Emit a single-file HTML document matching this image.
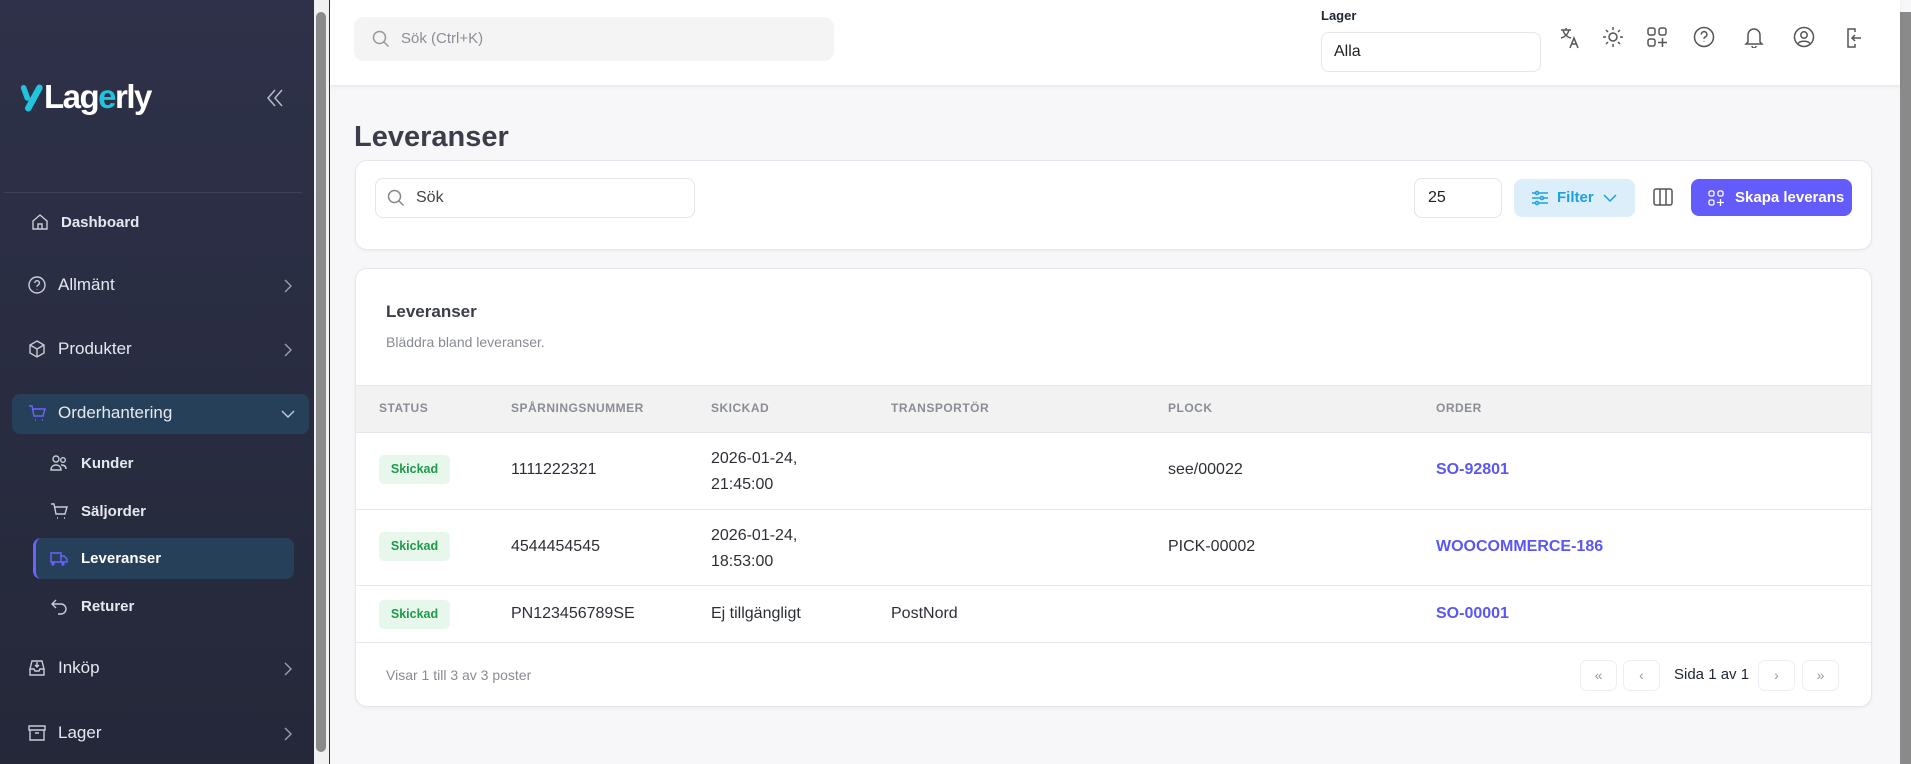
<!DOCTYPE html>
<html><head><meta charset="utf-8"><style>
*{box-sizing:border-box;margin:0;padding:0}
body{width:1911px;height:764px;overflow:hidden;font-family:"Liberation Sans",sans-serif;background:#f7f7f9;position:relative;color:#333}
.a{position:absolute}
#sb{left:0;top:0;width:314px;height:764px;background:linear-gradient(#2e3149,#242839)}
.si{position:absolute;color:#e6e8ef;font-size:17px;display:flex;align-items:center}
.si svg{stroke:#c9ccd6;fill:none;stroke-width:1.4}
.chev{position:absolute;left:282px;width:12px;height:16px}
.sub{font-size:15px;font-weight:bold}
.card{background:#fff;border:1px solid #e6e7ee;border-radius:12px;box-shadow:0 1px 3px rgba(0,0,0,.05)}
.th{position:absolute;top:401px;font-size:12px;font-weight:bold;color:#8a8d96;letter-spacing:.5px}
.td{position:absolute;font-size:16px;color:#2c2f36;line-height:26px}
.badge{position:absolute;left:379px;width:71px;height:29px;background:#e8f7ec;color:#1f9a48;font-size:12.5px;font-weight:bold;border-radius:5px;text-align:center;line-height:29px}
.lnk{position:absolute;left:1436px;font-size:16px;font-weight:bold;color:#5b57f5}
.pb{position:absolute;top:660px;width:37px;height:31px;border:1px solid #eceef2;border-radius:7px;color:#999;text-align:center;line-height:29px;font-size:14px}
.ic{position:absolute;top:26px;stroke:#555;fill:none;stroke-width:1.5}
</style></head><body>
<div id="sb" class="a">
 <svg class="a" style="left:19px;top:84px" width="26" height="28" viewBox="0 0 28 30"><path d="M5 4 L9 15" stroke="#22c4dd" stroke-width="6" stroke-linecap="round"/><path d="M22 4 L10 26" stroke="#22c4dd" stroke-width="7" stroke-linecap="round"/></svg>
 <div class="a" style="left:44px;top:78px;font-size:33px;font-weight:bold;color:#fff;letter-spacing:-1.5px">Lag<span style="color:#22c4dd">e</span>rly</div>
 <svg class="a" style="left:266px;top:88px" width="18" height="20" viewBox="0 0 18 20" fill="none" stroke="#b8bcc6" stroke-width="1.5"><path d="M9 2L2 10l7 8 M16 2L9 10l7 8"/></svg>
 <div class="a" style="left:4px;top:192px;width:298px;height:1px;background:#3e4258"></div>
 <div class="si" style="left:30px;top:212px;font-size:15px;font-weight:bold"><svg width="20" height="20" viewBox="0 0 20 20"><path d="M3 9l7-6 7 6v8H3z M8 17v-5h4v5"/></svg><span style="margin-left:11px">Dashboard</span></div>
 <div class="si" style="left:27px;top:275px"><svg width="20" height="20" viewBox="0 0 20 20"><circle cx="10" cy="10" r="8"/><path d="M7.8 8a2.3 2.3 0 1 1 3 2.2c-.6.3-.8.7-.8 1.5M10 14v.5"/></svg><span style="margin-left:11px">Allmänt</span></div>
 <svg class="chev" style="top:278px" viewBox="0 0 12 16" fill="none" stroke="#9aa0ad" stroke-width="1.4"><path d="M3 2l6 6-6 6"/></svg>
 <div class="si" style="left:27px;top:339px"><svg width="20" height="20" viewBox="0 0 20 20"><path d="M10 2l7 4v8l-7 4-7-4V6z M3 6l7 4 7-4 M10 10v8"/></svg><span style="margin-left:11px">Produkter</span></div>
 <svg class="chev" style="top:342px" viewBox="0 0 12 16" fill="none" stroke="#9aa0ad" stroke-width="1.4"><path d="M3 2l6 6-6 6"/></svg>
 <div class="a" style="left:12px;top:394px;width:297px;height:40px;background:#27405a;border-radius:8px"></div>
 <div class="si" style="left:27px;top:403px"><svg width="20" height="20" viewBox="0 0 20 20" style="stroke:#6c63ff"><path d="M2 3h3l2 10h9l2-7H6 M8 17h1 M15 17h1"/></svg><span style="margin-left:11px">Orderhantering</span></div>
 <svg class="a" style="left:280px;top:408px" width="16" height="12" viewBox="0 0 16 12" fill="none" stroke="#c9ccd6" stroke-width="1.4"><path d="M2 3l6 6 6-6"/></svg>
 <div class="si sub" style="left:49px;top:453px"><svg width="20" height="20" viewBox="0 0 20 20"><circle cx="7" cy="6" r="3"/><circle cx="14" cy="7" r="2.3"/><path d="M2 17c0-4 3-5 5-5s5 1 5 5z M12 12c3 0 5 1 5 4"/></svg><span style="margin-left:12px">Kunder</span></div>
 <div class="si sub" style="left:49px;top:501px"><svg width="20" height="20" viewBox="0 0 20 20"><path d="M2 3h3l2 10h9l2-7H6 M8 17h1 M15 17h1"/></svg><span style="margin-left:12px">Säljorder</span></div>
 <div class="a" style="left:33px;top:538px;width:261px;height:41px;background:#27405a;border-radius:8px;border-left:3px solid #6c63ff"></div>
 <div class="si sub" style="left:49px;top:548px;color:#fff"><svg width="20" height="20" viewBox="0 0 20 20" style="stroke:#6c63ff"><path d="M2 5h10v9H2z M12 8h3l3 3v3h-6 M5 16a1 1 0 1 0 0 .1 M15 16a1 1 0 1 0 0 .1"/></svg><span style="margin-left:12px">Leveranser</span></div>
 <div class="si sub" style="left:49px;top:596px"><svg width="20" height="20" viewBox="0 0 20 20"><path d="M7 4L3 8l4 4 M3 8h9a5 5 0 0 1 0 10H9"/></svg><span style="margin-left:12px">Returer</span></div>
 <div class="si" style="left:27px;top:658px"><svg width="20" height="20" viewBox="0 0 20 20"><path d="M3 11v6h14v-6 M3 11l2-8h10l2 8h-4l-1 2H8l-1-2z M10 4v5 M8 7l2 2 2-2"/></svg><span style="margin-left:11px">Inköp</span></div>
 <svg class="chev" style="top:661px" viewBox="0 0 12 16" fill="none" stroke="#9aa0ad" stroke-width="1.4"><path d="M3 2l6 6-6 6"/></svg>
 <div class="si" style="left:27px;top:723px"><svg width="20" height="20" viewBox="0 0 20 20"><path d="M2 3h16v4H2z M3 7v10h14V7 M8 10h4"/></svg><span style="margin-left:11px">Lager</span></div>
 <svg class="chev" style="top:726px" viewBox="0 0 12 16" fill="none" stroke="#9aa0ad" stroke-width="1.4"><path d="M3 2l6 6-6 6"/></svg>
</div>
<div class="a" style="left:314px;top:0;width:15px;height:764px;background:#f1f1f1"></div>
<div class="a" style="left:316px;top:12px;width:10px;height:740px;background:#8a8a8a;border-radius:5px"></div>
<div class="a" style="left:329px;top:0;width:1px;height:764px;background:#333"></div>
<div class="a" style="left:1900px;top:12px;width:11px;height:752px;background:#8a8a8a"></div>
<div class="a" style="left:330px;top:0;width:1570px;height:85px;background:#fff;box-shadow:0 2px 4px rgba(0,0,0,.06)"></div>
<div class="a" style="left:354px;top:17px;width:480px;height:44px;background:#f4f4f5;border-radius:10px;color:#8b8e96;font-size:15px;line-height:44px;padding-left:47px">Sök (Ctrl+K)</div>
<svg class="a" style="left:371px;top:29px" width="20" height="20" viewBox="0 0 20 20" fill="none" stroke="#999" stroke-width="1.5"><circle cx="8.5" cy="8.5" r="6"/><path d="M13 13l4.5 4.5"/></svg>
<div class="a" style="left:1321px;top:8px;font-size:13px;font-weight:bold;color:#1e2533">Lager</div>
<div class="a" style="left:1321px;top:32px;width:220px;height:40px;border:1px solid #e4e5ea;border-radius:8px;font-size:16px;line-height:38px;padding-left:12px;color:#222">Alla</div>
<svg class="ic" style="left:1559px" width="22" height="24" viewBox="0 0 22 24"><path d="M2 4h10 M7 2v2 M4 4c1 4 4 7 8 8 M10 4c-1 4-4 7-8 8 M11 22l4-10 4 10 M12.5 18h5"/></svg>
<svg class="ic" style="left:1602px" width="22" height="22" viewBox="0 0 22 22"><circle cx="11" cy="11" r="4"/><path d="M11 1v3 M11 18v3 M1 11h3 M18 11h3 M4 4l2 2 M16 16l2 2 M4 18l2-2 M16 6l2-2"/></svg>
<svg class="ic" style="left:1646px" width="22" height="22" viewBox="0 0 22 22"><rect x="2" y="2" width="7" height="7" rx="2"/><rect x="13" y="2" width="7" height="7" rx="2"/><rect x="2" y="13" width="7" height="7" rx="2"/><path d="M16.5 12v9 M12 16.5h9"/></svg>
<svg class="ic" style="left:1693px" width="22" height="22" viewBox="0 0 22 22"><circle cx="11" cy="11" r="9.5"/><path d="M8.3 8.5a2.8 2.8 0 1 1 3.6 2.6c-.7.3-.9.8-.9 1.8 M11 15.5v.5"/></svg>
<svg class="ic" style="left:1743px" width="22" height="22" viewBox="0 0 22 22"><path d="M5 16V9a6 6 0 0 1 12 0v7l2 2H3z M9 20a2 2 0 0 0 4 0"/></svg>
<svg class="ic" style="left:1793px" width="22" height="22" viewBox="0 0 22 22"><circle cx="11" cy="11" r="9.5"/><circle cx="11" cy="9" r="3.2"/><path d="M5 17.5c2-3 10-3 12 0"/></svg>
<svg class="ic" style="left:1843px" width="22" height="24" viewBox="0 0 22 24"><path d="M12 6V3H5v18h7v-3 M18 12H9 M12 9l-3 3 3 3"/></svg>
<div class="a" style="left:354px;top:121px;font-size:29px;font-weight:bold;color:#3b3d4a">Leveranser</div>
<div class="a card" style="left:355px;top:160px;width:1517px;height:90px"></div>
<div class="a" style="left:375px;top:178px;width:320px;height:40px;border:1px solid #e4e5ea;border-radius:8px;font-size:16px;line-height:38px;padding-left:40px;color:#444">Sök</div>
<svg class="a" style="left:386px;top:188px" width="20" height="20" viewBox="0 0 20 20" fill="none" stroke="#888" stroke-width="1.5"><circle cx="8.5" cy="8.5" r="6"/><path d="M13 13l4.5 4.5"/></svg>
<div class="a" style="left:1414px;top:178px;width:88px;height:40px;border:1px solid #e4e5ea;border-radius:8px;font-size:16px;line-height:38px;padding-left:13px;color:#222">25</div>
<div class="a" style="left:1514px;top:179px;width:121px;height:38px;background:#dbeef9;border-radius:8px;color:#1ea0e0;font-size:15px;font-weight:bold;line-height:38px;padding-left:43px">Filter</div>
<svg class="a" style="left:1531px;top:189px" width="18" height="18" viewBox="0 0 18 18" fill="none" stroke="#1ea0e0" stroke-width="1.5"><path d="M1 4h16 M1 9h16 M1 14h16"/><circle cx="6" cy="4" r="1.5" fill="#dbeef9"/><circle cx="11" cy="9" r="1.5" fill="#dbeef9"/><circle cx="6" cy="14" r="1.5" fill="#dbeef9"/></svg>
<svg class="a" style="left:1603px;top:193px" width="14" height="10" viewBox="0 0 14 10" fill="none" stroke="#1ea0e0" stroke-width="1.5"><path d="M1 2l6 6 6-6"/></svg>
<svg class="a" style="left:1653px;top:187px" width="20" height="20" viewBox="0 0 20 20" fill="none" stroke="#555" stroke-width="1.5"><rect x="1" y="2" width="18" height="16" rx="2"/><path d="M7 2v16 M13 2v16"/></svg>
<div class="a" style="left:1691px;top:179px;width:161px;height:37px;background:#645bfb;border-radius:8px;color:#fff;font-size:15px;font-weight:bold;line-height:37px;padding-left:44px">Skapa leverans</div>
<svg class="a" style="left:1708px;top:190px" width="16" height="16" viewBox="0 0 16 16" fill="none" stroke="#fff" stroke-width="1.3"><rect x="1" y="1" width="5" height="5" rx="1.5"/><rect x="10" y="1" width="5" height="5" rx="1.5"/><rect x="1" y="10" width="5" height="5" rx="1.5"/><path d="M12.5 9v7 M9 12.5h7"/></svg>
<div class="a card" style="left:355px;top:268px;width:1517px;height:439px;overflow:hidden">
 <div class="a" style="left:0;top:116px;width:1517px;height:48px;background:#f2f2f3;border-top:1px solid #e6e7ee;border-bottom:1px solid #e6e7ee"></div>
 <div class="a" style="left:0;top:240px;width:1517px;height:1px;background:#e6e7f0"></div>
 <div class="a" style="left:0;top:316px;width:1517px;height:1px;background:#e6e7f0"></div>
 <div class="a" style="left:0;top:373px;width:1517px;height:1px;background:#e6e7f0"></div>
</div>
<div class="a" style="left:386px;top:302px;font-size:17px;font-weight:bold;color:#3b3d4a">Leveranser</div>
<div class="a" style="left:386px;top:334px;font-size:14px;color:#888b93">Bläddra bland leveranser.</div>
<div class="th" style="left:379px">STATUS</div>
<div class="th" style="left:511px">SPÅRNINGSNUMMER</div>
<div class="th" style="left:711px">SKICKAD</div>
<div class="th" style="left:891px">TRANSPORTÖR</div>
<div class="th" style="left:1168px">PLOCK</div>
<div class="th" style="left:1436px">ORDER</div>
<div class="badge" style="top:455px">Skickad</div>
<div class="td" style="left:511px;top:457px">1111222321</div>
<div class="td" style="left:711px;top:446px">2026-01-24,<br>21:45:00</div>
<div class="td" style="left:1168px;top:457px">see/00022</div>
<div class="lnk" style="top:461px">SO-92801</div>
<div class="badge" style="top:532px">Skickad</div>
<div class="td" style="left:511px;top:534px">4544454545</div>
<div class="td" style="left:711px;top:523px">2026-01-24,<br>18:53:00</div>
<div class="td" style="left:1168px;top:534px">PICK-00002</div>
<div class="lnk" style="top:538px">WOOCOMMERCE-186</div>
<div class="badge" style="top:600px">Skickad</div>
<div class="td" style="left:511px;top:601px">PN123456789SE</div>
<div class="td" style="left:711px;top:601px">Ej tillgängligt</div>
<div class="td" style="left:891px;top:601px">PostNord</div>
<div class="lnk" style="top:605px">SO-00001</div>
<div class="a" style="left:386px;top:667px;font-size:14px;color:#888b93">Visar 1 till 3 av 3 poster</div>
<div class="pb" style="left:1580px">«</div>
<div class="pb" style="left:1623px">‹</div>
<div class="a" style="left:1674px;top:666px;font-size:15px;color:#1e2533">Sida 1 av 1</div>
<div class="pb" style="left:1758px">›</div>
<div class="pb" style="left:1802px">»</div>
</body></html>
